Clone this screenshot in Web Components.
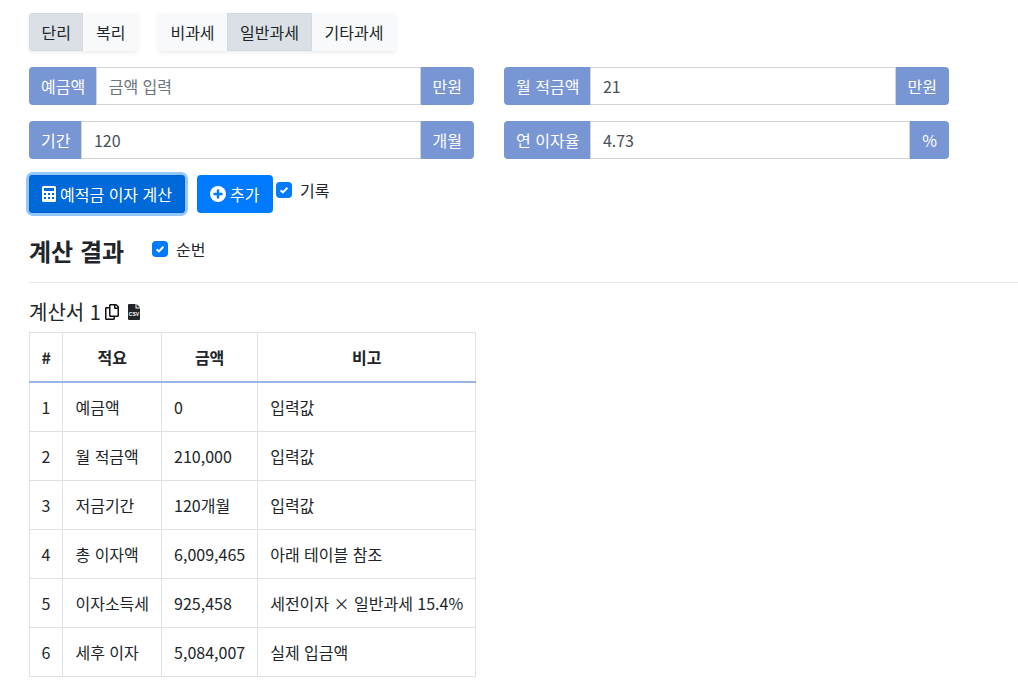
<!DOCTYPE html>
<html lang="ko">
<head>
<meta charset="utf-8">
<title>예적금 이자 계산</title>
<style>
    html, body { margin: 0; padding: 0; background: #fff; }
    body { font: 16px/24px "Noto Sans CJK KR", "Noto Sans", sans-serif; color: #212529; }
</style>
</head>
<body>
<calc-app></calc-app>
<script>
class BtnGroup extends HTMLElement {
    connectedCallback() {
        this.attachShadow({ mode: 'open' });
        this.shadowRoot.innerHTML = `
            <style>
                :host {
                    display: inline-flex;
                    border-radius: 4px;
                    box-shadow: 0 2px 4px rgba(0,0,0,.075);
                    overflow: hidden;
                }
            </style>
            <slot></slot>
        `;
    }
}
customElements.define('btn-group', BtnGroup);

class ToggleBtn extends HTMLElement {
    connectedCallback() {
        this.attachShadow({ mode: 'open' });
        this.shadowRoot.innerHTML = `
            <style>
                :host {
                    display: block;
                    padding: 7px 12.5px;
                    background: #f8f9fa;
                    color: #212529;
                    white-space: nowrap;
                }
                :host([active]) {
                    background: #dae0e5;
                    box-shadow: inset 0 0 0 1px #d3d9df;
                }
            </style>
            <slot></slot>
        `;
    }
}
customElements.define('toggle-btn', ToggleBtn);

class InputGroup extends HTMLElement {
    connectedCallback() {
        const label = this.getAttribute('label');
        const unit = this.getAttribute('unit');
        const value = this.getAttribute('value') || '';
        const placeholder = this.getAttribute('placeholder') || '';
        this.attachShadow({ mode: 'open' });
        this.shadowRoot.innerHTML = `
            <style>
                :host { display: flex; height: 38px; }
                .addon {
                    display: flex;
                    align-items: center;
                    padding: 0 12px;
                    background: #7896d3;
                    color: #fff;
                    white-space: nowrap;
                }
                .addon.left { border-radius: 4px 0 0 4px; }
                .addon.right { border-radius: 0 4px 4px 0; }
                input {
                    flex: 1;
                    min-width: 0;
                    box-sizing: border-box;
                    height: 38px;
                    margin: 0 0 0 -1px;
                    padding: 6px 12px 6px 11.5px;
                    border: 1px solid #ced4da;
                    border-radius: 0;
                    outline: 0;
                    font: inherit;
                    color: #495057;
                    background: #fff;
                }
                input::placeholder { color: #6c757d; opacity: 1; }
            </style>
            <span class="addon left">${label}</span>
            <input type="text" value="${value}" placeholder="${placeholder}">
            <span class="addon right">${unit}</span>
        `;
    }
}
customElements.define('input-group', InputGroup);

class ActionBtn extends HTMLElement {
    connectedCallback() {
        this.attachShadow({ mode: 'open' });
        this.shadowRoot.innerHTML = `
            <style>
                :host {
                    display: inline-flex;
                    align-items: center;
                    height: 38px;
                    box-sizing: border-box;
                    padding: 0 13px;
                    gap: 4px;
                    border-radius: 4px;
                    background: #007bff;
                    color: #fff;
                    white-space: nowrap;
                }
                :host([focused]) {
                    background: #0069d9;
                    box-shadow: 0 0 0 1px #0062cc inset, 0 0 0 3px rgba(38,143,255,.5);
                }
                ::slotted(svg) { display: block; }
            </style>
            <slot name="icon"></slot>
            <slot></slot>
        `;
    }
}
customElements.define('action-btn', ActionBtn);

class CheckBox extends HTMLElement {
    connectedCallback() {
        this.attachShadow({ mode: 'open' });
        this.shadowRoot.innerHTML = `
            <style>
                :host { display: inline-flex; align-items: center; gap: 8px; line-height: 24px; }
                .box {
                    width: 16px;
                    height: 16px;
                    border-radius: 4px;
                    background: #007bff;
                    display: block;
                }
            </style>
            <svg class="box" viewBox="0 0 16 16"><path d="M4.6 8.2l2.3 2.2 4.5-4.6" fill="none" stroke="#fff" stroke-width="2"/></svg>
            <slot></slot>
        `;
    }
}
customElements.define('check-box', CheckBox);

class ResultTable extends HTMLElement {
    connectedCallback() {
        const rows = [
            ['1', '예금액', '0', '입력값'],
            ['2', '월 적금액', '210,000', '입력값'],
            ['3', '저금기간', '120개월', '입력값'],
            ['4', '총 이자액', '6,009,465', '아래 테이블 참조'],
            ['5', '이자소득세', '925,458', '세전이자 × 일반과세 15.4%'],
            ['6', '세후 이자', '5,084,007', '실제 입금액'],
        ];
        this.attachShadow({ mode: 'open' });
        this.shadowRoot.innerHTML = `
            <style>
                :host { display: block; }
                table { border-collapse: collapse; color: #212529; }
                th, td {
                    border: 1px solid #dee2e6;
                    padding: 12px;
                    white-space: nowrap;
                    text-align: left;
                    font-weight: 400;
                }
                th { text-align: center; font-weight: 700; }
                th:first-child, td:first-child { padding-left: 11.5px; padding-right: 11.5px; }
                thead th { border-bottom: 2px solid #9bb5e6; }
            </style>
            <table>
                <thead><tr><th>#</th><th>적요</th><th>금액</th><th>비고</th></tr></thead>
                <tbody>
                    ${rows.map(r => `<tr>${r.map(c => `<td>${c}</td>`).join('')}</tr>`).join('')}
                </tbody>
            </table>
        `;
    }
}
customElements.define('result-table', ResultTable);

class CalcApp extends HTMLElement {
    connectedCallback() {
        this.attachShadow({ mode: 'open' });
        this.shadowRoot.innerHTML = `
            <style>
                :host { display: block; padding: 13px 0 0 29px; }
                .toggles { display: flex; gap: 20px; margin-bottom: 16px; }
                .inputs {
                    display: grid;
                    grid-template-columns: 445px 445px;
                    column-gap: 30px;
                    row-gap: 16px;
                    margin-bottom: 16px;
                }
                .actions { display: flex; align-items: flex-start; gap: 12px; }
                .actions check-box { margin: 3px 0 0 -9.5px; }
                .heading { display: flex; align-items: flex-start; gap: 28px; margin-top: 16px; height: 46px; }
                .heading check-box { margin-top: 8px; }
                h4 { margin: 4px 0 0; font-size: 24px; line-height: 36px; font-weight: 700; }
                hr { margin: 7px 0 0; border: 0; border-top: 1px solid #e5e7ea; }
                .sheet-title {
                    display: flex;
                    align-items: center;
                    gap: 5px;
                    margin: 16px 0 7px;
                    font-size: 20px;
                    line-height: 26px;
                }
                .sheet-title svg { display: block; }
            </style>
            <div class="toggles">
                <btn-group>
                    <toggle-btn active>단리</toggle-btn>
                    <toggle-btn>복리</toggle-btn>
                </btn-group>
                <btn-group>
                    <toggle-btn>비과세</toggle-btn>
                    <toggle-btn active style="padding:7px 13px">일반과세</toggle-btn>
                    <toggle-btn>기타과세</toggle-btn>
                </btn-group>
            </div>
            <div class="inputs">
                <input-group label="예금액" unit="만원" placeholder="금액 입력"></input-group>
                <input-group label="월 적금액" unit="만원" value="21"></input-group>
                <input-group label="기간" unit="개월" value="120"></input-group>
                <input-group label="연 이자율" unit="%" value="4.73"></input-group>
            </div>
            <div class="actions">
                <action-btn focused>
                    <svg slot="icon" width="14" height="16" viewBox="0 0 14 16"><path fill="#fff" fill-rule="evenodd" d="M1.5 0h11A1.5 1.5 0 0 1 14 1.5v13a1.5 1.5 0 0 1-1.5 1.5h-11A1.5 1.5 0 0 1 0 14.500v-13A1.500 1.500 0 0 1 1.500 0zM2 2v3h10V2zM2 7v2h2V7zM6 7v2h2V7zM10 7v2h2V7zM2 11v2h2v-2zM6 11v2h2v-2zM10 11v2h2v-2z"/></svg>
                    예적금 이자 계산
                </action-btn>
                <action-btn style="padding-right:14px">
                    <svg slot="icon" width="16" height="16" viewBox="0 0 16 16"><circle cx="8" cy="8" r="8" fill="#fff"/><path d="M8 3.500v9M3.500 8h9" stroke="#007bff" stroke-width="2.400"/></svg>
                    추가
                </action-btn>
                <check-box>기록</check-box>
            </div>
            <div class="heading">
                <h4>계산 결과</h4>
                <check-box>순번</check-box>
            </div>
            <hr>
            <div class="sheet-title">
                <span>계산서 1</span>
                <svg width="14" height="16" viewBox="0 0 448 512" style="margin-left:-1px"><path fill="#111" d="M433.941 65.941l-51.882-51.882A48 48 0 0 0 348.118 0H176c-26.51 0-48 21.49-48 48v48H48c-26.51 0-48 21.49-48 48v320c0 26.51 21.49 48 48 48h224c26.51 0 48-21.49 48-48v-48h80c26.51 0 48-21.49 48-48V99.882a48 48 0 0 0-14.059-33.941zM266 464H54a6 6 0 0 1-6-6V150a6 6 0 0 1 6-6h74v224c0 26.51 21.49 48 48 48h96v42a6 6 0 0 1-6 6zm128-96H182a6 6 0 0 1-6-6V54a6 6 0 0 1 6-6h106v88c0 13.255 10.745 24 24 24h88v202a6 6 0 0 1-6 6zm6-256h-64V48h9.632c1.591 0 3.117.632 4.243 1.757l48.368 48.368a6 6 0 0 1 1.757 4.243V112z"/></svg>
                <svg width="12" height="16" viewBox="0 0 12 16" style="margin-left:4px"><path fill="#212529" d="M1 0h6.500v4.500H12V15a1 1 0 0 1-1 1H1a1 1 0 0 1-1-1V1a1 1 0 0 1 1-1zM8.500 0L12 3.500H8.500z"/><text x="6" y="12" text-anchor="middle" font-size="5" font-weight="700" font-family="Liberation Sans, sans-serif" fill="#fff">CSV</text></svg>
            </div>
            <result-table></result-table>
        `;
    }
}
customElements.define('calc-app', CalcApp);
</script>
</body>
</html>
